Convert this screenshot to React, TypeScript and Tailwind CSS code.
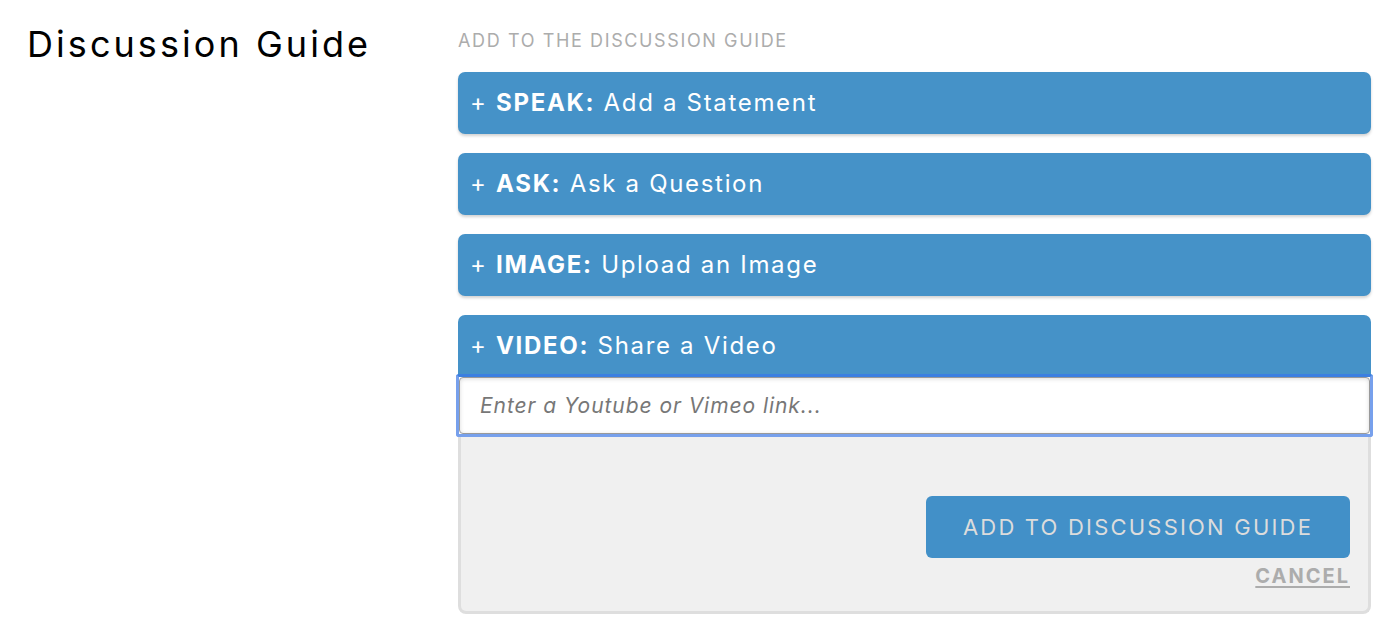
import { useState } from "react";

const items = [
  { kind: "SPEAK:", label: "Add a Statement" },
  { kind: "ASK:", label: "Ask a Question" },
  { kind: "IMAGE:", label: "Upload an Image" },
];

export default function App() {
  const [link, setLink] = useState("");

  return (
    <div className="flex min-h-[624px] w-[1386px] bg-white font-['Inter',sans-serif]">
      {/* TITLE */}
      <div className="w-[458px] pl-[27px] pt-[22px]">
        <h1 className="text-[36px] leading-[44px] tracking-[0.085em] text-black">Discussion Guide</h1>
      </div>

      {/* ADD PANEL */}
      <div className="w-[913px] pt-[30px]">
        <div className="text-[18px] leading-[22px] tracking-[0.09em] text-[#acacac]">ADD TO THE DISCUSSION GUIDE</div>
        <div className="mt-[20px] flex flex-col gap-[19px]">
          {items.map((it) => (
            <button
              key={it.kind}
              className="flex h-[62px] items-center rounded-[7px] bg-[#4592c8] pl-[12px] text-left text-[24px] tracking-[0.07em] text-white shadow-[0_2px_3px_rgba(0,0,0,0.18)]"
            >
              <span>+&nbsp;</span>
              <span className="font-bold">{it.kind}</span>
              <span>&nbsp;{it.label}</span>
            </button>
          ))}

          <div>
            <button className="flex h-[61px] w-full items-center rounded-t-[7px] bg-[#4592c8] pl-[12px] text-left text-[24px] tracking-[0.07em] text-white">
              <span>+&nbsp;</span>
              <span className="font-bold">VIDEO:</span>
              <span>&nbsp;Share a Video</span>
            </button>
            <div className="-mx-[2px] -mt-[2px] rounded-[3px] border-[3px] border-[#77a0ec] border-t-[#3b7fe0] bg-white">
              <input
                value={link}
                onChange={(e) => setLink(e.target.value)}
                placeholder="Enter a Youtube or Vimeo link..."
                className="h-[57px] w-full rounded-[4px] border border-[#999] bg-white px-[20px] text-[21px] italic tracking-[0.045em] text-[#333] shadow-[inset_0_1px_4px_rgba(0,0,0,0.15)] outline-none placeholder:text-[#777]"
              />
            </div>
            <div className="flex h-[177px] flex-col items-end rounded-b-[8px] border-x-[3px] border-b-[3px] border-[#dedede] bg-[#f0f0f0] pr-[18px] pt-[59px]">
              <button className="h-[62px] w-[424px] rounded-[6px] bg-[#4290c8] text-[22px] tracking-[0.1em] text-[#dcdcdc]">
                ADD TO DISCUSSION GUIDE
              </button>
              <button className="mt-[3px] text-[20px] font-bold tracking-[0.1em] text-[#acacac] underline underline-offset-[3px]">
                CANCEL
              </button>
            </div>
          </div>
        </div>
      </div>
    </div>
  );
}
